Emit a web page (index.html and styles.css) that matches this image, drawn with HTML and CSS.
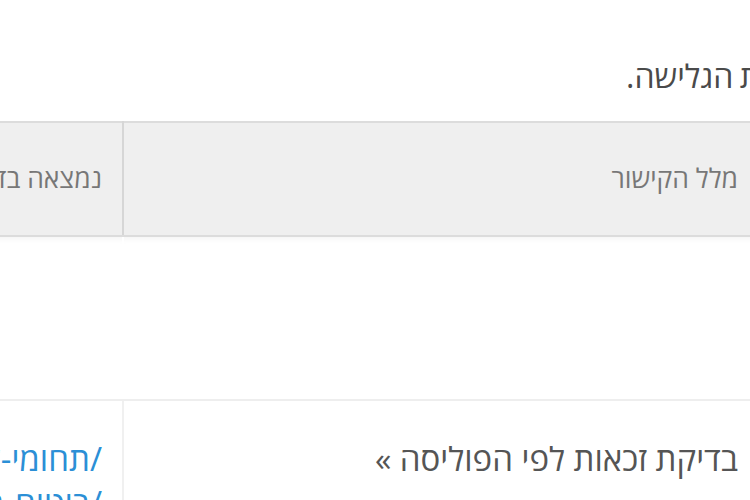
FILE: index.html
```html
<!DOCTYPE html>
<html lang="he" dir="rtl">
<head>
<meta charset="utf-8">
<link rel="stylesheet" href="styles.css">
</head>
<body>
<div class="page">
  <div class="intro-row">
    <p class="intro">בסריקה נמצאו קישורים שבורים שפוגעים בחוויית הגלישה.</p>
  </div>
  <table class="links">
    <colgroup>
      <col class="c-text">
      <col class="c-page">
    </colgroup>
    <thead>
      <tr>
        <th class="col-text">מלל הקישור</th>
        <th class="col-page">נמצאה בדף</th>
      </tr>
    </thead>
    <tbody>
      <tr class="empty-row">
        <td class="col-text"></td>
        <td class="col-page"></td>
      </tr>
      <tr>
        <td class="col-text">בדיקת זכאות לפי הפוליסה »</td>
        <td class="col-page"><a href="#">/תחומי-שירות/<br>/ביטוח-בריאות/</a></td>
      </tr>
    </tbody>
  </table>
</div>
</body>
</html>
```
FILE: styles.css
```css
html, body {
  margin: 0;
  padding: 0;
  background: #fff;
  overflow: hidden;
}
.page {
  direction: rtl;
  width: 1000px;
  margin-right: -8px;
  font-family: "Open Sans", "DejaVu Sans", sans-serif;
  font-size: 33px;
  color: #555;
}
.intro-row {
  display: flex;
  justify-content: flex-end;
  padding-left: 868px;
  padding-top: 54px;
  height: 67px;
}
.intro {
  margin: 0;
  flex: none;
  font-size: 32px;
  word-spacing: -2px;
  line-height: 44px;
  white-space: nowrap;
  color: #4a4a4a;
}
.links {
  width: 1000px;
  border-collapse: collapse;
  table-layout: fixed;
}
.c-text { width: 635px; }
.c-page { width: 365px; }
.links th,
.links td {
  text-align: right;
  vertical-align: top;
  line-height: 44px;
  font-weight: normal;
}
.links th {
  background: #efefef;
  color: #777;
  font-size: 26.5px;
  height: 114px;
  padding: 33px 20px 0 17px;
  box-sizing: border-box;
  border-top: 2px solid #dcdcdc;
  border-bottom: 2px solid #dcdcdc;
}
.links th.col-text {
  border-left: 2px solid #d6d6d6;
}
.links td {
  padding: 36px 20px 0 17px;
  border-bottom: 2px solid #eeeeee;
}
.links td.col-text {
  border-left: 2px solid #f0f0f0;
  color: #555;
}
.empty-row td {
  height: 164px;
  box-sizing: border-box;
  border-left-color: transparent !important;
  box-shadow: inset 0 8px 6px -6px #f4f4f4;
}
.links a {
  color: #2b8fd6;
  text-decoration: none;
}
```
